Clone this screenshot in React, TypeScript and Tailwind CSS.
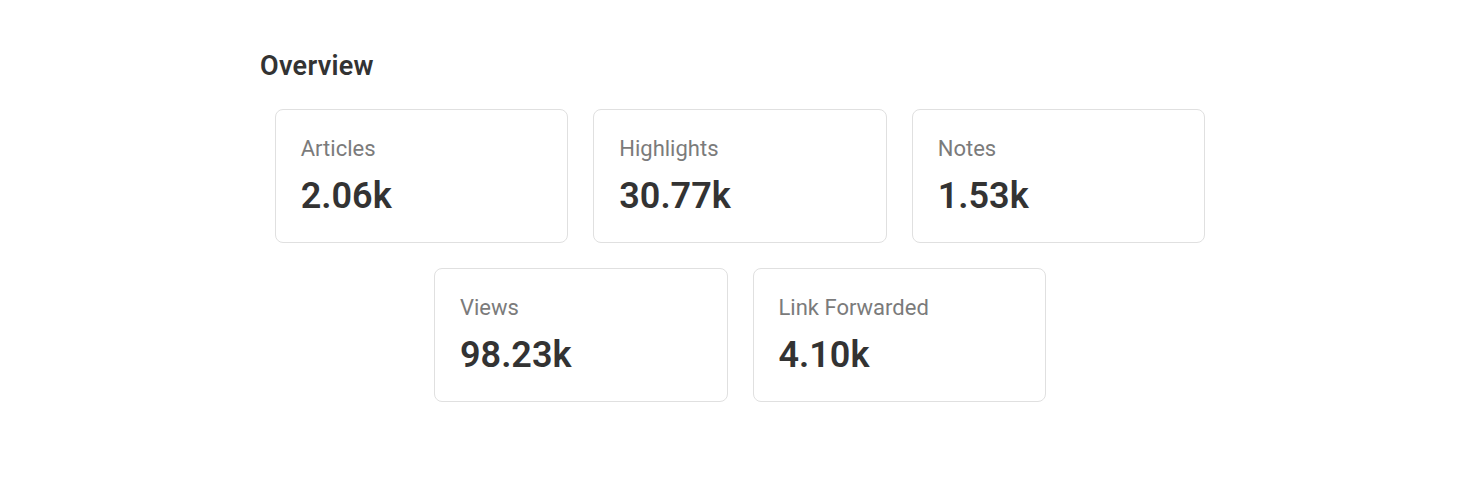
const stats = [
  [
    { label: "Articles", value: "2.06k" },
    { label: "Highlights", value: "30.77k" },
    { label: "Notes", value: "1.53k" },
  ],
  [
    { label: "Views", value: "98.23k" },
    { label: "Link Forwarded", value: "4.10k" },
  ],
];

function StatCard({ label, value }: { label: string; value: string }) {
  return (
    <div className="box-border h-[134px] w-[293.5px] rounded-lg border border-[#e0e0e0] bg-white pl-[25px] pr-6 pt-6">
      <p className="text-[22px] leading-[30px] text-[#7b7b7b]">{label}</p>
      <p className="mt-3 text-[36px] font-semibold leading-10 text-[#333333]">{value}</p>
    </div>
  );
}

export default function App() {
  return (
    <div className="min-h-[504px] bg-white pt-[50px] font-['Roboto',sans-serif]">
      <div className="ml-[260px] w-[960px]">
        <h2 className="text-[27px] font-semibold leading-8 tracking-[0.3px] text-[#333333]">Overview</h2>
        <div className="mt-[27px] flex flex-col gap-[25px]">
          {stats.map((row, i) => (
            <div key={i} className="flex justify-center gap-[25px]">
              {row.map((s) => (
                <StatCard key={s.label} label={s.label} value={s.value} />
              ))}
            </div>
          ))}
        </div>
      </div>
    </div>
  );
}
